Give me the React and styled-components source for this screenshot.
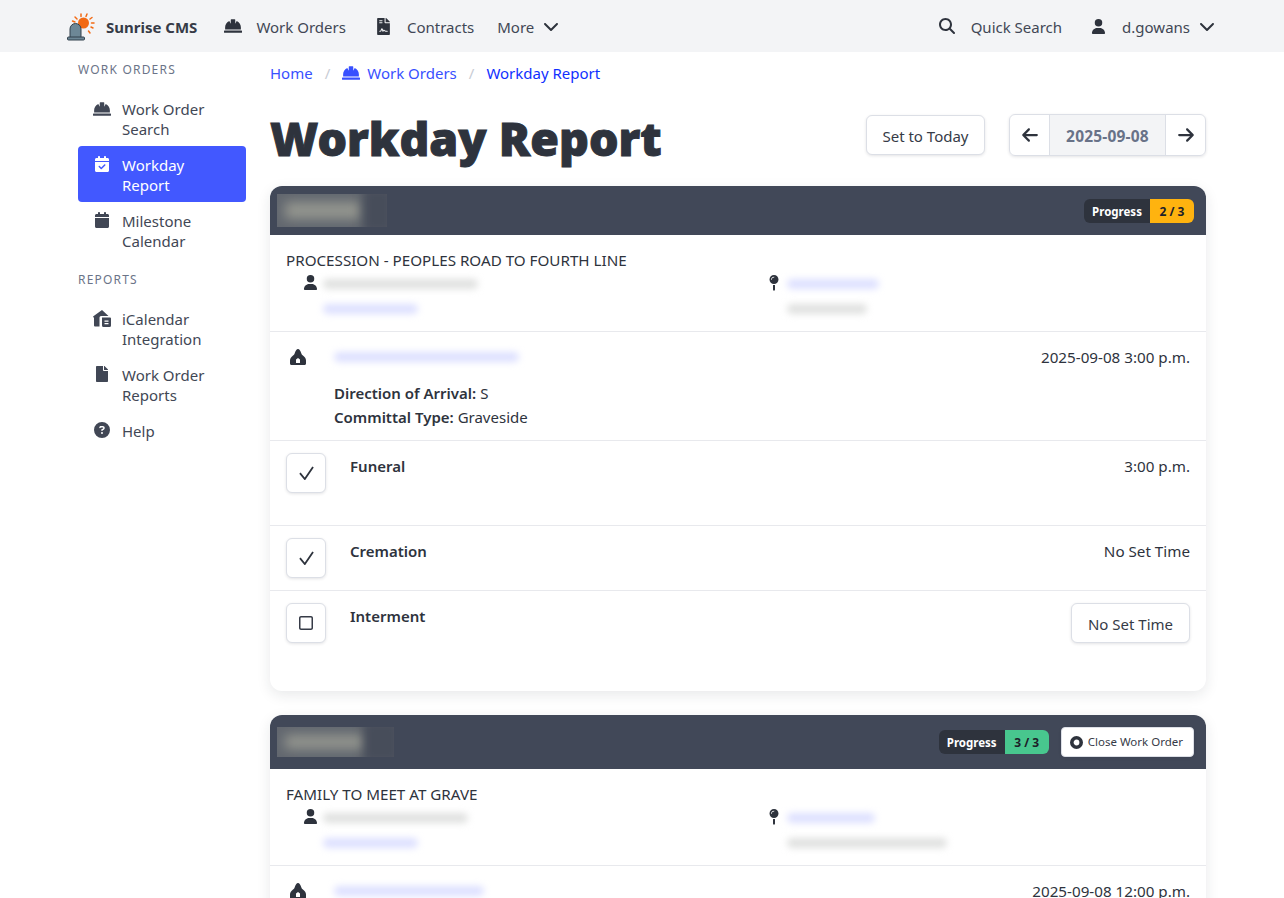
import React from 'react'
import styled, { createGlobalStyle } from 'styled-components'
import { FaFile, FaFileContract, FaHardHat, FaMapPin } from 'react-icons/fa'
import {
  FaArrowLeft, FaArrowRight, FaCalendar, FaCalendarCheck, FaChevronDown,
  FaCircleQuestion, FaMagnifyingGlass, FaRegSquare, FaUser,
} from 'react-icons/fa6'

const GlobalStyle = createGlobalStyle`
  html, body { margin: 0; padding: 0; background: #fff; }
  body {
    font-family: "Noto Sans", "Open Sans", sans-serif;
    font-size: 15px;
    line-height: 24px;
    color: #2e333d;
    overflow: hidden;
    height: 898px;
  }
`

const TopBar = styled.header`
  display: flex;
  align-items: center;
  justify-content: space-between;
  box-sizing: border-box;
  height: 52px;
  background: #f3f4f6;
  padding: 1px 69px 0 67px;
`

const TopGroup = styled.div`
  display: flex;
  align-items: center;
`

const Brand = styled.span`
  font-weight: 700;
  font-size: 15px;
  margin: 0 27px 0 11px;
  color: #363b47;
`

const TopItem = styled.a`
  display: flex;
  align-items: center;
  gap: ${({ $inner }) => $inner || 14}px;
  margin-left: ${({ $gap }) => $gap || 0}px;
  font-size: 15px;
  color: #414755;
  svg { color: #2e333d; margin-top: -1px; }
`

const MenuChevron = styled(FaChevronDown)`
  margin-left: -7px;
`

const Layout = styled.div`
  display: grid;
  grid-template-columns: 168px 936px;
  gap: 24px;
  padding-left: 78px;
`

const Sidebar = styled.aside`
  display: flex;
  flex-direction: column;
`

const MenuLabel = styled.p`
  margin: ${({ $first }) => ($first ? '8px 0 10px' : '12px 0 10px')};
  font-size: 12px;
  line-height: 20px;
  letter-spacing: 1.2px;
  color: #6b7488;
`

const MenuItem = styled.a`
  display: grid;
  grid-template-columns: 24px 1fr;
  column-gap: 8px;
  padding: 9px 12px 7px;
  border-radius: 4px;
  font-size: 15px;
  line-height: 20px;
  color: ${({ $active }) => ($active ? '#fff' : '#414755')};
  background: ${({ $active }) => ($active ? '#4258ff' : 'transparent')};
  svg { margin-top: 1px; justify-self: center; }
`

const Main = styled.main`
  display: flex;
  flex-direction: column;
`

const Crumbs = styled.nav`
  display: flex;
  align-items: center;
  height: 24px;
  margin-top: 9px;
  font-size: 15px;
  color: #3850ff;
`

const CrumbSep = styled.span`
  margin: 0 12px;
  color: #c8ccd4;
`

const CrumbLink = styled.a`
  display: flex;
  align-items: center;
  gap: 7px;
  color: ${({ $current }) => ($current ? '#1030ff' : '#3850ff')};
`

const TitleRow = styled.div`
  display: flex;
  align-items: center;
  justify-content: space-between;
  height: 42px;
  margin: 29px 0 30px;
`

const Title = styled.h1`
  margin: 0;
  padding-top: 6px;
  font-size: 46.500px;
  font-weight: 900;
  line-height: 48px;
  -webkit-text-stroke: 1px #2e333d;
  color: #2e333d;
`

const Tools = styled.div`
  display: flex;
  align-items: center;
  gap: 24px;
`

const Button = styled.button`
  height: 40px;
  padding: 1px 15.500px 0;
  display: inline-flex;
  align-items: center;
  justify-content: center;
  background: #fff;
  border: 1px solid #dcdfe6;
  border-radius: 6px;
  box-shadow: 0 1px 3px rgba(30, 35, 50, 0.12);
  font: inherit;
  font-size: 15px;
  color: #363b47;
`

const TimeButton = styled(Button)`
  padding: 1px 16px 0;
`

const DateGroup = styled.div`
  display: flex;
  height: 40px;
  border: 1px solid #dcdfe6;
  border-radius: 6px;
  box-shadow: 0 1px 3px rgba(30, 35, 50, 0.12);
  overflow: hidden;
`

const DateArrow = styled.span`
  width: 39px;
  display: flex;
  align-items: center;
  justify-content: center;
  color: #2e333d;
`

const DateValue = styled.span`
  width: 115px;
  padding-top: 1px;
  display: flex;
  align-items: center;
  justify-content: center;
  background: #f3f4f6;
  border-left: 1px solid #dcdfe6;
  border-right: 1px solid #dcdfe6;
  font-weight: 700;
  font-size: 15.500px;
  letter-spacing: 0.2px;
  color: #687288;
`

const Card = styled.section`
  border-radius: 12px;
  background: #fff;
  box-shadow: 0 4px 14px rgba(30, 35, 50, 0.1);
  margin-bottom: 24px;
`

const CardHead = styled.div`
  display: flex;
  align-items: center;
  justify-content: space-between;
  height: ${({ $h }) => $h}px;
  padding: 0 12px 0 7px;
  background: #414858;
  border-radius: 12px 12px 0 0;
  overflow: hidden;
`

const HeadBlur = styled.div`
  width: ${({ $w }) => $w}px;
  height: ${({ $h }) => $h}px;
  overflow: hidden;
  background: #62676f;
  position: relative;
  &::before {
    content: '';
    position: absolute;
    inset: 8px 26px 8px 8px;
    background: #94968f;
    filter: blur(6px);
  }
  &::after {
    content: '';
    position: absolute;
    inset: -6px -6px -6px 86px;
    background: #474d5a;
    filter: blur(5px);
  }
`

const HeadRight = styled.div`
  display: flex;
  align-items: center;
  gap: 12px;
`

const Tag = styled.div`
  display: flex;
  height: 24px;
  border-radius: 6px;
  overflow: hidden;
  font-size: 11.500px;
  font-weight: 700;
  line-height: 26px;
`

const TagLabel = styled.span`
  width: 66px;
  text-align: center;
  background: #2e333d;
  color: #fff;
`

const TagValue = styled.span`
  width: 44px;
  text-align: center;
  font-size: 12px;
  background: ${({ $tone }) => $tone};
  color: #1d2129;
`

const CloseButton = styled(Button)`
  height: 30px;
  padding: 0 10px 0 8px;
  gap: 5px;
  font-size: 11.500px;
  border-radius: 4px;
  svg { color: #2e333d; }
`

const Summary = styled.div`
  padding: 13px 16px 9px;
  border-bottom: 1px solid #e8e9ed;
`

const SummaryText = styled.div`
  font-size: 15.200px;
  color: #2e333d;
`

const SummaryGrid = styled.div`
  display: grid;
  grid-template-columns: 472px 1fr;
  margin-top: 1px;
`

const SummaryCol = styled.div`
  display: grid;
  grid-template-columns: 16px 1fr;
  padding-left: ${({ $narrow }) => ($narrow ? '8px' : '16px')};
  svg { margin-top: 2px; justify-self: center; }
`

const BlurLines = styled.div`
  display: flex;
  flex-direction: column;
  gap: 15px;
  padding: 6px 0 8px 5px;
`

const BlurLine = styled.div`
  width: ${({ $w }) => $w}px;
  height: 10px;
  border-radius: 5px;
  background: ${({ $link }) => ($link ? '#dde0ff' : '#e0e1e0')};
  filter: blur(3.500px);
`

const BurialRow = styled.div`
  display: grid;
  grid-template-columns: 44px 1fr auto;
  padding: 13px 16px 11px 20px;
  border-bottom: 1px solid #e8e9ed;
  font-size: 15.200px;
`

const BurialIcon = styled.svg`
  margin-top: 4px;
`

const BurialName = styled.div`
  display: flex;
  align-items: center;
  height: 24px;
  margin-bottom: 12px;
`

const Detail = styled.div`
  font-size: 15px;
  b { font-weight: 600; }
`

const Task = styled.div`
  display: grid;
  grid-template-columns: 64px 1fr auto;
  min-height: ${({ $h }) => $h}px;
  padding: 12px 16px 0;
  border-bottom: ${({ $last }) => ($last ? '0' : '1px solid #e8e9ed')};
  box-sizing: border-box;
  font-size: 15.200px;
  line-height: 26px;
`

const TaskName = styled.div`
  font-size: 15px;
  font-weight: 600;
`

const CheckBox = styled(Button)`
  width: 40px;
  padding: 0;
`

const Logo = () => (
  <svg width="28" height="28" viewBox="0 0 28 28">
    <g stroke="#f26a15" strokeWidth="1.5" strokeLinecap="round">
      <path d="M10 6 8 4M14 3.500V1M19 3.500 20 1M23 6l2-1.500M24.500 10H27M24 14l2 1M21.500 18l1.500 2M8 9 5.500 8" />
    </g>
    <circle cx="16.500" cy="10" r="5.500" fill="#f26a15" />
    <path d="M3 25V16a5.500 5.500 0 0 1 11 0v9z" fill="#6d8796" stroke="#33414c" strokeWidth="1" />
    <rect x="0.500" y="24" width="17" height="3" rx="1" fill="#6d8796" stroke="#33414c" strokeWidth="1" />
  </svg>
)

const HouseFile = () => (
  <svg width="18" height="17" viewBox="0 0 18 17" fill="currentColor">
    <path d="M9 0 0 6.500 1 8v7.500a1 1 0 0 0 1 1h4.500V7.500A1.500 1.500 0 0 1 8 6h7.500L9 0z" />
    <path fillRule="evenodd" d="M9 7.500h8a1 1 0 0 1 1 1v7a1.500 1.500 0 0 1-1.500 1.500h-6A1.500 1.500 0 0 1 9 15.500v-8zm2.500 3v1.200h4v-1.200h-4zm0 2.500v1.200h4V13h-4z" />
  </svg>
)

const Funeral = () => (
  <BurialIcon width="16" height="16" viewBox="0 0 16 16">
    <path
      fill="currentColor"
      fillRule="evenodd"
      d="M8 0C6.600 0 5.500 2 4.800 4 4.400 5.400 3.800 6 2.500 7 1 8.200 0 9.800 0 11.500V14.500C0 15.400.6 16 1.500 16h13c.9 0 1.500-.6 1.500-1.500v-3c0-1.700-1-3.300-2.500-4.500-1.300-1-1.900-1.600-2.300-3C10.500 2 9.400 0 8 0zM6 10.500 8 9l2 1.500V14H6v-3.500z"
    />
  </BurialIcon>
)

const Check = () => (
  <svg width="15" height="14" viewBox="0 0 16 15" fill="none">
    <path d="M1 7.700 6.200 14 15 1" stroke="#2e333d" strokeWidth="1.900" />
  </svg>
)

const Ring = () => (
  <svg width="13" height="13" viewBox="0 0 13 13" fill="none">
    <circle cx="6.500" cy="6.500" r="4.700" stroke="currentColor" strokeWidth="3.600" />
  </svg>
)

const Report = ({ head, note, person, sub, siteLink, tone, value, children }) => (
  <Card>
    <CardHead $h={head.h}>
      <HeadBlur $w={head.w} $h={head.blur} />
      <HeadRight>
        <Tag>
          <TagLabel>Progress</TagLabel>
          <TagValue $tone={tone}>{value}</TagValue>
        </Tag>
        {head.close && <CloseButton><Ring />Close Work Order</CloseButton>}
      </HeadRight>
    </CardHead>
    <Summary>
      <SummaryText>{note}</SummaryText>
      <SummaryGrid>
        <SummaryCol>
          <FaUser size={15} />
          <BlurLines>
            <BlurLine $w={person} />
            <BlurLine $w={95} $link />
          </BlurLines>
        </SummaryCol>
        <SummaryCol $narrow>
          <FaMapPin size={16} />
          <BlurLines>
            <BlurLine $w={siteLink} $link />
            <BlurLine $w={sub} />
          </BlurLines>
        </SummaryCol>
      </SummaryGrid>
    </Summary>
    {children}
  </Card>
)

export default function App() {
  return (
    <>
      <GlobalStyle />
      <TopBar>
        <TopGroup>
          <Logo />
          <Brand>Sunrise CMS</Brand>
          <TopItem><FaHardHat size={18} />Work Orders</TopItem>
          <TopItem $gap={29} $inner={15}><FaFileContract size={17} />Contracts</TopItem>
          <TopItem $gap={23} $inner={16}>More<MenuChevron size={16} /></TopItem>
        </TopGroup>
        <TopGroup>
          <TopItem $inner={16}><FaMagnifyingGlass size={16} />Quick Search</TopItem>
          <TopItem $gap={29} $inner={16}><FaUser size={15} />d.gowans<MenuChevron size={16} /></TopItem>
        </TopGroup>
      </TopBar>
      <Layout>
        <Sidebar>
          <MenuLabel $first>WORK ORDERS</MenuLabel>
          <MenuItem><FaHardHat size={18} />Work Order<br />Search</MenuItem>
          <MenuItem $active><FaCalendarCheck size={16} />Workday<br />Report</MenuItem>
          <MenuItem><FaCalendar size={16} />Milestone<br />Calendar</MenuItem>
          <MenuLabel>REPORTS</MenuLabel>
          <MenuItem><HouseFile />iCalendar<br />Integration</MenuItem>
          <MenuItem><FaFile size={16} />Work Order<br />Reports</MenuItem>
          <MenuItem><FaCircleQuestion size={16} />Help</MenuItem>
        </Sidebar>
        <Main>
          <Crumbs>
            <CrumbLink>Home</CrumbLink>
            <CrumbSep>/</CrumbSep>
            <CrumbLink><FaHardHat size={18} />Work Orders</CrumbLink>
            <CrumbSep>/</CrumbSep>
            <CrumbLink $current>Workday Report</CrumbLink>
          </Crumbs>
          <TitleRow>
            <Title>Workday Report</Title>
            <Tools>
              <Button>Set to Today</Button>
              <DateGroup>
                <DateArrow><FaArrowLeft size={18} /></DateArrow>
                <DateValue>2025-09-08</DateValue>
                <DateArrow><FaArrowRight size={18} /></DateArrow>
              </DateGroup>
            </Tools>
          </TitleRow>
          <Report
            head={{ h: 49, w: 110, blur: 33 }}
            note="PROCESSION - PEOPLES ROAD TO FOURTH LINE"
            person={155}
            siteLink={92}
            sub={80}
            tone="#ffb30f"
            value="2 / 3"
          >
            <BurialRow>
              <Funeral />
              <div>
                <BurialName><BlurLine $w={185} $link /></BurialName>
                <Detail><b>Direction of Arrival:</b> S</Detail>
                <Detail><b>Committal Type:</b> Graveside</Detail>
              </div>
              <span>2025-09-08 3:00 p.m.</span>
            </BurialRow>
            <Task $h={85}>
              <CheckBox><Check /></CheckBox>
              <TaskName>Funeral</TaskName>
              <span>3:00 p.m.</span>
            </Task>
            <Task $h={65}>
              <CheckBox><Check /></CheckBox>
              <TaskName>Cremation</TaskName>
              <span>No Set Time</span>
            </Task>
            <Task $h={100} $last>
              <CheckBox><FaRegSquare size={16} /></CheckBox>
              <TaskName>Interment</TaskName>
              <TimeButton>No Set Time</TimeButton>
            </Task>
          </Report>
          <Report
            head={{ h: 54, w: 117, blur: 30, close: true }}
            note="FAMILY TO MEET AT GRAVE"
            person={145}
            siteLink={88}
            sub={160}
            tone="#48c78e"
            value="3 / 3"
          >
            <BurialRow>
              <Funeral />
              <div>
                <BurialName><BlurLine $w={150} $link /></BurialName>
              </div>
              <span>2025-09-08 12:00 p.m.</span>
            </BurialRow>
          </Report>
        </Main>
      </Layout>
    </>
  )
}
